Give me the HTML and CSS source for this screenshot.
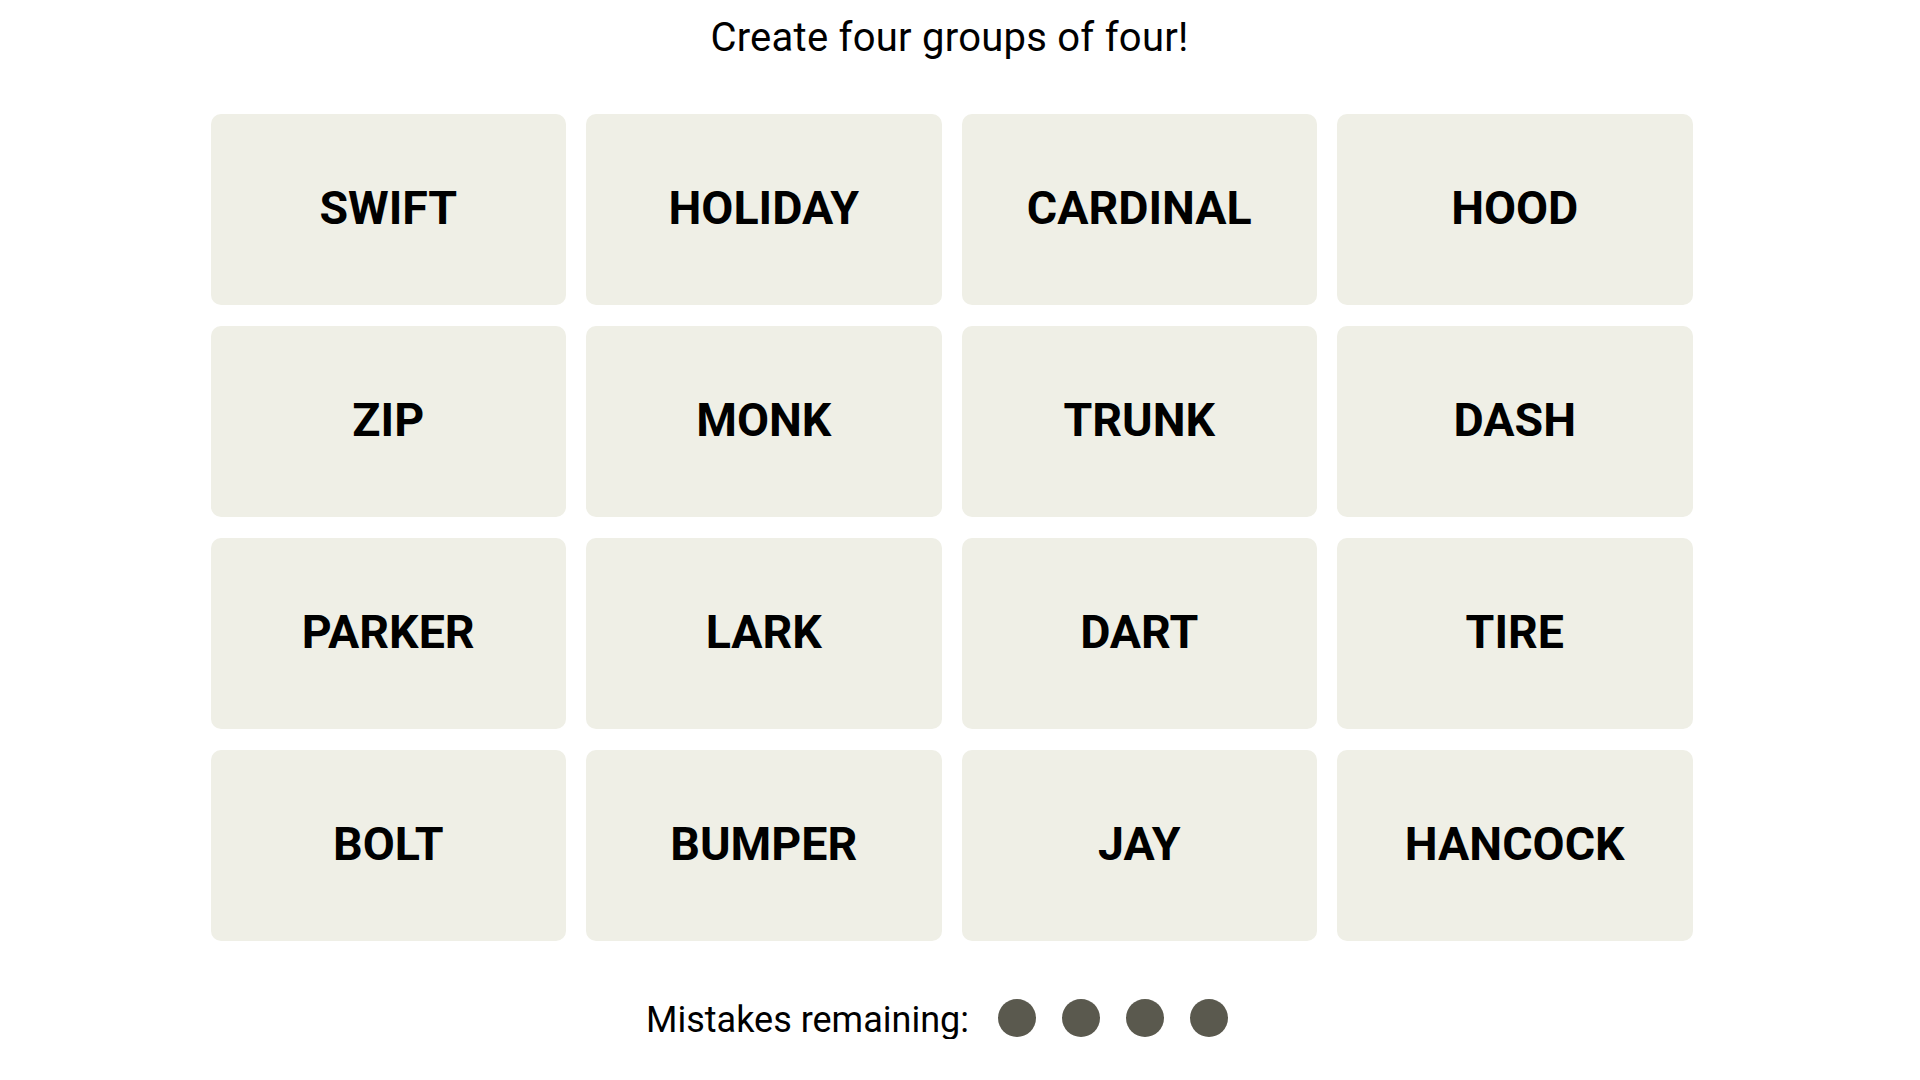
FILE: index.html
```html
<!DOCTYPE html>
<html lang="en">
<head>
<meta charset="utf-8">
<title>Connections</title>
<link rel="stylesheet" href="styles.css">
</head>
<body>
<main class="game">
  <h1 class="prompt">Create four groups of four!</h1>
  <section class="board">
    <button class="tile">SWIFT</button>
    <button class="tile">HOLIDAY</button>
    <button class="tile">CARDINAL</button>
    <button class="tile">HOOD</button>
    <button class="tile">ZIP</button>
    <button class="tile">MONK</button>
    <button class="tile">TRUNK</button>
    <button class="tile">DASH</button>
    <button class="tile">PARKER</button>
    <button class="tile">LARK</button>
    <button class="tile">DART</button>
    <button class="tile">TIRE</button>
    <button class="tile">BOLT</button>
    <button class="tile">BUMPER</button>
    <button class="tile">JAY</button>
    <button class="tile">HANCOCK</button>
  </section>
  <div class="mistakes">
    <span class="mistakes-label">Mistakes remaining:</span>
    <span class="dots">
      <span class="dot"></span>
      <span class="dot"></span>
      <span class="dot"></span>
      <span class="dot"></span>
    </span>
  </div>
</main>
</body>
</html>
```

FILE: styles.css
```css
html, body {
  margin: 0;
  padding: 0;
  background: #ffffff;
}

body {
  font-family: Roboto, "Liberation Sans", Arial, sans-serif;
  color: #000;
}

.game {
  width: 1903px;
  display: flex;
  flex-direction: column;
  align-items: center;
}

.prompt {
  margin: 14px 0 0;
  padding-right: 4px;
  font-size: 40px;
  line-height: 48px;
  font-weight: 400;
  letter-spacing: 0.25px;
}

.board {
  margin-top: 52px;
  display: grid;
  grid-template-columns: repeat(4, 355.5px);
  grid-auto-rows: 191px;
  column-gap: 20px;
  row-gap: 21px;
}

.tile {
  border: none;
  border-radius: 10px;
  background: #efefe6;
  color: #000;
  font-family: Roboto, "Liberation Sans", Arial, sans-serif;
  font-weight: 700;
  font-size: 46.5px;
  padding: 0 0 4px;
  display: flex;
  align-items: center;
  justify-content: center;
  cursor: pointer;
}

.mistakes {
  margin-top: 56px;
  padding-right: 29px;
  display: flex;
  align-items: center;
  gap: 29px;
}

.mistakes-label {
  font-size: 36px;
  line-height: 38px;
  padding-top: 4px;
}

.dots {
  display: flex;
  gap: 26px;
}

.dot {
  width: 38px;
  height: 38px;
  border-radius: 50%;
  background: #5a594e;
}
```
